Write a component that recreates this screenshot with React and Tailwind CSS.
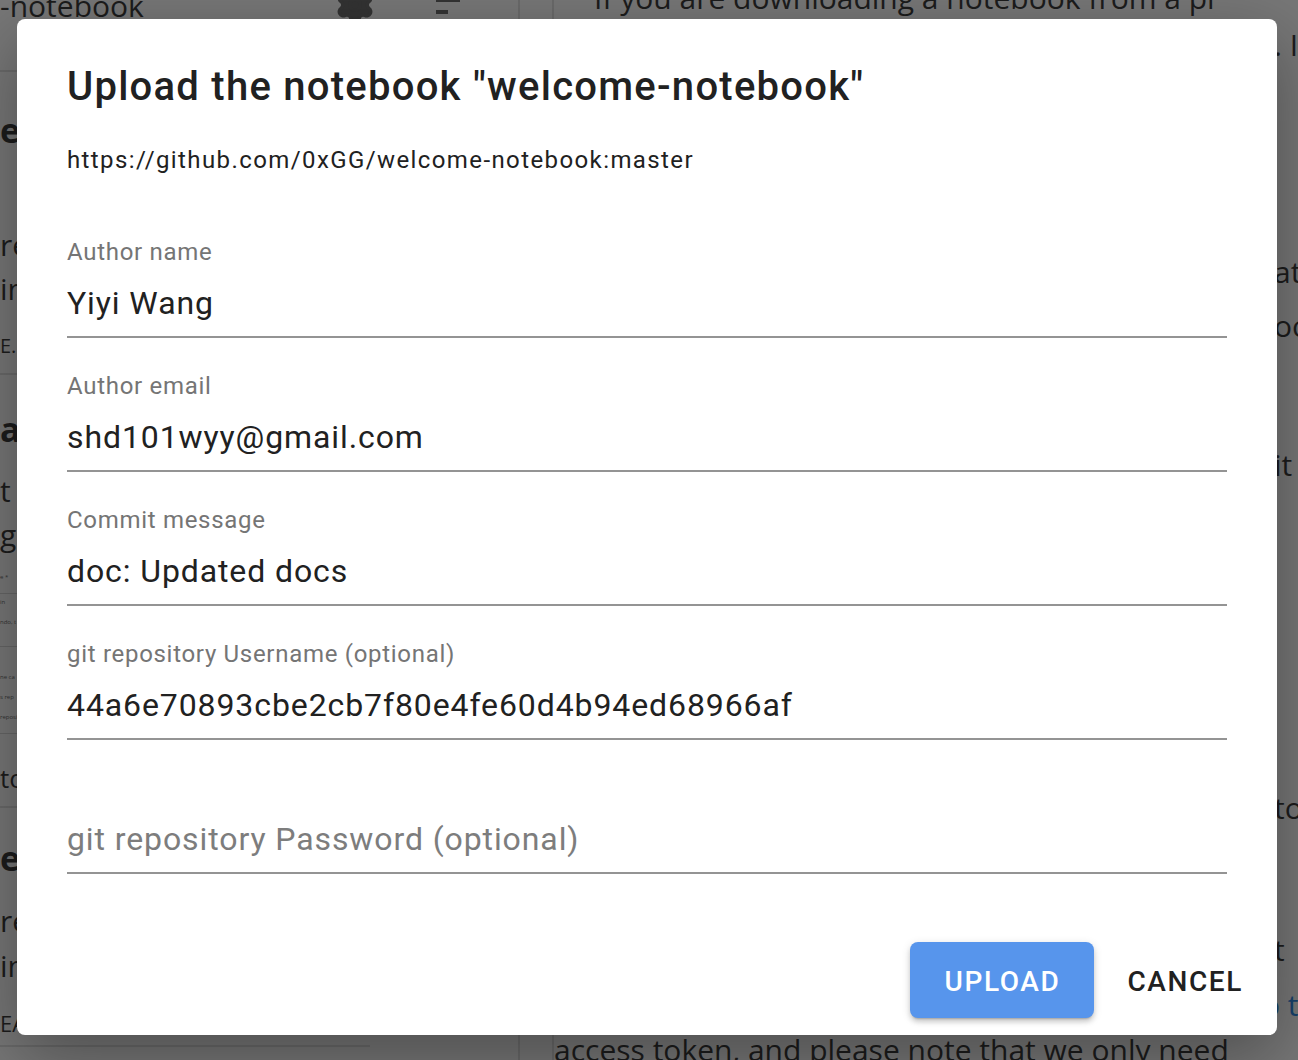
import { Settings } from 'lucide-react';

const fields = [
  { label: 'Author name', value: 'Yiyi Wang' },
  { label: 'Author email', value: 'shd101wyy@gmail.com' },
  { label: 'Commit message', value: 'doc: Updated docs' },
  { label: 'git repository Username (optional)', value: '44a6e70893cbe2cb7f80e4fe60d4b94ed68966af' },
  { label: '', value: '', placeholder: 'git repository Password (optional)' },
];

function Field({ label, value, placeholder }) {
  return (
    <div className="flex flex-col mt-[34px] first:mt-0">
      <div className="h-[28px] text-[24px] leading-[28px] tracking-[0.7px] text-[#757575]">{label}</div>
      <div className="mt-[17px] pb-[13px] border-b-2 border-[#949494]">
        <input
          readOnly
          value={value}
          placeholder={placeholder}
          className="w-full h-[40px] text-[32px] leading-[40px] tracking-[0.9px] text-[#212121] placeholder:text-[#7d7d7d] bg-transparent outline-none"
        />
      </div>
    </div>
  );
}

function BackgroundPage() {
  return (
    <div className="flex h-full text-[#1c1c1c]" style={{ fontFamily: '"Open Sans", sans-serif' }}>
      <div className="w-[520px] shrink-0 border-r-2 border-[#6a6a6a] overflow-hidden">
        <div className="h-[72px] flex items-start border-b-2 border-[#6a6a6a]">
          <span className="text-[30px] leading-[24px] -mt-[6px]">-notebook</span>
          <Settings className="ml-[190px] -mt-[16px] w-[42px] h-[42px] text-[#333] fill-[#333]" strokeWidth={2} />
          <div className="ml-[60px] flex flex-col gap-[8px] -mt-[2px]">
            <div className="w-[24px] h-[4px] bg-[#333]" />
            <div className="w-[12px] h-[4px] bg-[#333]" />
          </div>
        </div>
        <div className="mt-[38px] text-[34px] font-bold leading-[40px]">elcome</div>
        <div className="mt-[73px] text-[30px] leading-[44px]">re</div>
        <div className="text-[30px] leading-[44px]">in</div>
        <div className="mt-[22px] text-[20px] leading-[26px] pb-[14px] border-b-2 border-[#6a6a6a]">E.</div>
        <div className="mt-[34px] text-[34px] font-bold leading-[40px]">al</div>
        <div className="mt-[20px] text-[30px] leading-[44px]">t</div>
        <div className="text-[30px] leading-[44px]">g</div>
        <div className="mt-[4px] h-[176px] flex flex-col gap-[12px] text-[6px] leading-[8px] text-[#333] overflow-hidden">
          <div className="mt-[12px]">e *</div>
          <div className="border-t border-[#666] pt-[4px]">in</div>
          <div>ndo, t</div>
          <div className="border-t border-[#666] mt-[8px]" />
          <div className="mt-[14px]">ne ca</div>
          <div>s rep</div>
          <div>reposi</div>
          <div className="border-t border-[#666] pt-[2px]">ame *</div>
          <div>s repo</div>
        </div>
        <div className="mt-[23px] text-[26px] leading-[36px] pb-[10px] border-b-2 border-[#6a6a6a]">to</div>
        <div className="mt-[30px] text-[34px] font-bold leading-[40px]">elcome</div>
        <div className="mt-[21px] text-[30px] leading-[44px]">re</div>
        <div className="mt-[1px] text-[30px] leading-[44px]">in</div>
        <div className="mt-[21px] text-[22px] leading-[28px]">EA</div>
        <div className="mt-[8px] border-b-2 border-[#6a6a6a] w-[370px]" />
      </div>
      <div className="w-[34px] shrink-0 border-r-2 border-[#6a6a6a]" />
      <div className="flex-1 pl-[40px] text-[30px] leading-[44px] whitespace-nowrap overflow-hidden">
        <div className="-mt-[24px]">If you are downloading a notebook from a pi</div>
        <div className="ml-[680px] mt-[3px]">. I</div>
        <div className="ml-[680px] mt-[183px]">at</div>
        <div className="ml-[680px] mt-[10px]">oo</div>
        <div className="ml-[680px] mt-[95px]">it</div>
        <div className="ml-[680px] mt-[299px]">to</div>
        <div className="ml-[680px] mt-[98px]">t</div>
        <div className="ml-[668px] mt-[11px] text-[#17416b]">o t</div>
        <div className="-ml-[40px] mt-[1px]">access token, and please note that we only need</div>
      </div>
    </div>
  );
}

export default function App() {
  return (
    <div className="relative w-[1298px] h-[1060px] overflow-hidden bg-[#777777]">
      <BackgroundPage />
      <div
        className="absolute left-[17px] top-[19px] w-[1260px] h-[1016px] bg-white rounded-[8px] shadow-[0_22px_70px_rgba(0,0,0,0.35)] flex flex-col"
        style={{ fontFamily: 'Roboto, "Liberation Sans", sans-serif' }}
      >
        <div className="pt-[36px] px-[50px]">
          <h2 className="text-[40px] leading-[64px] font-medium tracking-[1.25px] text-[#212121]">
            Upload the notebook "welcome-notebook"
          </h2>
          <div className="mt-[23px] text-[24px] leading-[36px] tracking-[1.4px] text-[#212121]">
            https://github.com/0xGG/welcome-notebook:master
          </div>
          <div className="mt-[60px] flex flex-col">
            {fields.map((f, i) => (
              <Field key={i} {...f} />
            ))}
          </div>
        </div>
        <div className="mt-auto flex justify-end items-center gap-[17px] pr-[18px] pb-[17px]">
          <button className="w-[184px] h-[76px] pt-[4px] rounded-[8px] bg-[#5795ec] text-white text-[28px] font-medium tracking-[1.6px] shadow-[0_3px_2px_-2px_rgba(0,0,0,0.2),0_4px_5px_0_rgba(0,0,0,0.14),0_2px_10px_0_rgba(0,0,0,0.12)]">
            UPLOAD
          </button>
          <button className="h-[76px] pt-[4px] px-[16px] text-[28px] font-medium tracking-[1.6px] text-[#212121]">
            CANCEL
          </button>
        </div>
      </div>
    </div>
  );
}
